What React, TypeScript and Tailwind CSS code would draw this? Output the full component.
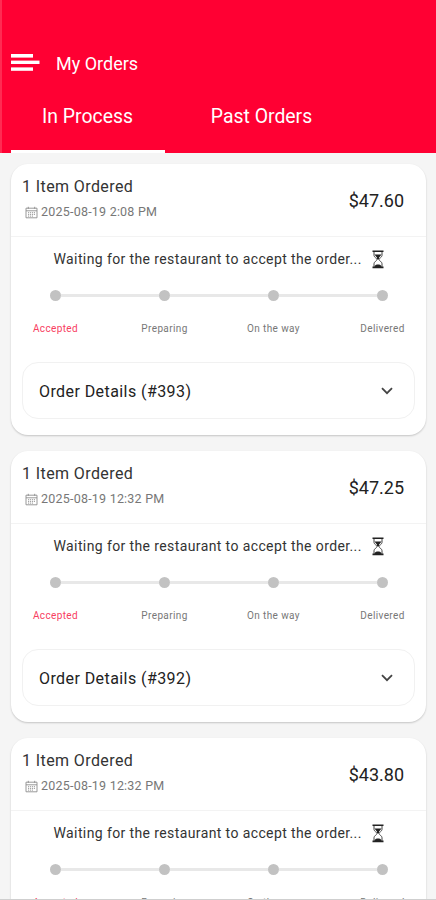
const orders = [
  { id: 393, items: 1, date: "2025-08-19 2:08 PM", price: "$47.60" },
  { id: 392, items: 1, date: "2025-08-19 12:32 PM", price: "$47.25" },
  { id: 391, items: 1, date: "2025-08-19 12:32 PM", price: "$43.80" },
];

const steps = ["Accepted", "Preparing", "On the way", "Delivered"];

const MenuIcon = () => (
  <svg width="29" height="18" viewBox="0 0 29 18" fill="#fff">
    <rect x="0" y="0" width="22" height="3.6" />
    <rect x="0" y="6.6" width="28.5" height="3.4" />
    <rect x="0" y="13.4" width="22" height="3.4" />
  </svg>
);

const CalendarIcon = () => (
  <svg width="13" height="13" viewBox="0 0 13 13" fill="none" stroke="#8d8d8d" strokeWidth="0.9">
    <path d="M1 2.2h11v9.6H1zM1 4.8h11" />
    <path d="M3.3 0.8v2M9.7 0.8v2" />
    <path d="M3 6.7h7M3 8.4h7M3 10.1h5" strokeDasharray="1.2 0.8" />
  </svg>
);

const HourglassIcon = () => (
  <svg width="12" height="19" viewBox="0 0 12 19" fill="none" stroke="#444" strokeWidth="1">
    <path d="M0.5 1.2h11M0.5 17.4h11" stroke="#222" strokeWidth="1.6" />
    <path d="M2 2v3.500c0 1.800 3 2.800 3 4s-3 2.200-3 4.200V17M10 2v3.500c0 1.800-3 2.800-3 4s3 2.200 3 4.200V17" />
    <path d="M2.500 4.500h7L7 7.800v1.500H5V7.800zM2.500 17c0-1.800 2-2.400 3.500-2.400s3.500 0.600 3.500 2.400z" fill="#222" stroke="none" />
  </svg>
);

const ChevronIcon = () => (
  <svg width="12" height="8" viewBox="0 0 12 8" fill="none" stroke="#444" strokeWidth="1.8">
    <path d="M1 1.200l5 5 5-5" />
  </svg>
);

type Order = (typeof orders)[number];

const OrderCard = ({ order }: { order: Order }) => {
  return (
    <div className="h-[271px] shrink-0 rounded-[17px] bg-white shadow-[0_1px_2px_rgba(0,0,0,0.2)]">
      <div className="flex h-[73px] items-center justify-between border-b border-[#f3f3f3] pl-[11px] pr-[22px]">
        <div>
          <h2 className="text-[16px] leading-[22px] tracking-[0.4px] text-[#333]">
            {order.items} Item Ordered
          </h2>
          <div className="mt-[3px] mb-[1px] flex items-center gap-[3px] pl-[3px]">
            <CalendarIcon />
            <span className="text-[12.5px] leading-[22px] tracking-[0.22px] text-[#777]">{order.date}</span>
          </div>
        </div>
        <span className="text-[18px] text-[#222]">{order.price}</span>
      </div>

      <div className="flex h-[44px] items-center gap-[10px] pl-[42.5px]">
        <p className="text-[14px] tracking-[0.39px] whitespace-nowrap text-[#333]">
          Waiting for the restaurant to accept the order...
        </p>
        <HourglassIcon />
      </div>

      <div className="mt-[9px] flex items-center pl-[38.5px] pr-[38.5px]">
        {steps.map((step, i) => (
          <div key={step} className={i === 0 ? "flex items-center" : "flex flex-1 items-center"}>
            {i > 0 && <div className="h-[3px] flex-1 bg-[#e8e8e8]" />}
            <div className="size-[11px] rounded-full bg-[#c2c2c2]" />
          </div>
        ))}
      </div>
      <div className="-ml-[10px] mt-[20px] grid w-[436px] grid-cols-4 text-center">
        {steps.map((step, i) => (
          <span
            key={step}
            className={`text-[10px] leading-[16px] tracking-[0.38px] ${i === 0 ? "text-[#f8405f]" : "text-[#777]"}`}
          >
            {step}
          </span>
        ))}
      </div>

      <button className="mx-[11px] mt-[25px] flex h-[57px] w-[393px] items-center justify-between rounded-[16px] border border-[#f1f1f1] pl-[16px] pr-[21px]">
        <span className="pt-[2px] text-[16px] tracking-[0.42px] text-[#222]">Order Details (#{order.id})</span>
        <ChevronIcon />
      </button>
    </div>
  );
};

const App = () => {
  return (
    <div className="flex h-[900px] w-[436px] flex-col overflow-hidden border-b border-[#cfcfcf] bg-[#f5f5f5] font-['Roboto',sans-serif]">
      <header className="h-[153px] shrink-0 border-l-2 border-[#ff2b52] bg-[#ff0033] pt-[46px] text-white">
        <div className="flex h-[34px] items-center gap-[16px] pl-[9px]">
          <MenuIcon />
          <h1 className="text-[18px]">My Orders</h1>
        </div>
        <nav className="flex h-[73px] gap-[16px] pl-[9px] text-[19.4px]">
          <button className="w-[154px] border-b-[3px] border-white pt-[3px] pr-[1px]">In Process</button>
          <button className="w-[163px] border-b-[3px] border-transparent pt-[3px] pr-[2px]">Past Orders</button>
        </nav>
      </header>

      <main className="flex flex-1 flex-col gap-[16px] overflow-hidden pl-[11px] pr-[10px] pt-[11px]">
        {orders.map((order) => (
          <OrderCard key={order.id} order={order} />
        ))}
      </main>
    </div>
  );
};

export default App;
